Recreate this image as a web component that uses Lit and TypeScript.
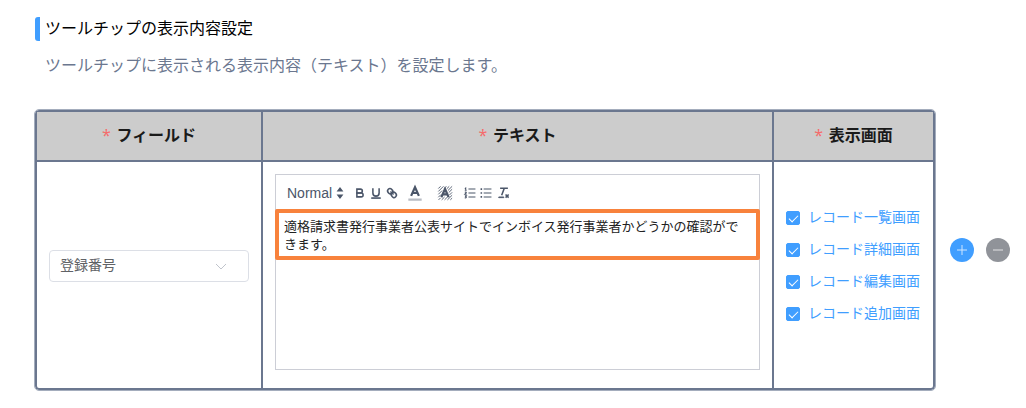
import { LitElement, html, svg, css } from "lit";
import { customElement, state } from "lit/decorators.js";

const line = (x1: number, x2: number, y1: number, y2: number) =>
  svg`<line x1=${x1} x2=${x2} y1=${y1} y2=${y2}></line>`;

const tools = [
  {
    label: "太字",
    kind: "tool",
    icon: svg`<path d="M5,4H9.5A2.5,2.5,0,0,1,9.5,9H5Z"/><path d="M5,9h5.5A2.5,2.5,0,0,1,10.5,14H5Z"/>`,
  },
  {
    label: "下線",
    kind: "tool",
    icon: svg`<path d="M5,3V9a4,4,0,0,0,8,0V3"/><rect class="solid" x="3" y="15" width="12" height="1" rx="0.5"/>`,
  },
  {
    label: "リンク",
    kind: "tool",
    icon: svg`${line(7, 11, 7, 11)}<path d="M8.9,4.577a3.476,3.476,0,0,1,.36,4.679A3.476,3.476,0,0,1,4.577,8.9C3.185,7.5,2.035,6.4,4.217,4.217S7.5,3.185,8.9,4.577Z"/><path d="M13.423,9.1a3.476,3.476,0,0,0-4.679-.36,3.476,3.476,0,0,0,.36,4.679c1.392,1.392,2.5,2.542,4.679.36S14.815,10.5,13.423,9.1Z"/>`,
  },
  {
    label: "文字色",
    kind: "tool color",
    icon: svg`<path class="faint" d="M3 15H15"/><path d="M5.5 11.6 9 3.8 12.5 11.6M6.6 9H11.4"/>`,
  },
  {
    label: "背景色",
    kind: "tool color",
    icon: svg`<path stroke-width="0.8" d="M3 5 5 3M3 7.6 7.6 3M3 10.2 6.4 6.8M3 12.8 5.4 10.4M3.2 15.2 5 13.4M6 15.2 8.6 12.6M8.6 15.2 11.2 12.6M11.2 15.2 15.4 11M13.8 15.2 15.4 13.6M8.4 4.8 10.2 3M10.6 5.2 12.8 3M11.6 6.8 15.4 3M12.4 8.6 15.4 5.6M13 10.8 15.4 8.4"/><path d="M5.7 12.8 9 5.4 12.3 12.8M6.8 10.2H11.2"/>`,
  },
  {
    label: "番号付きリスト",
    kind: "tool group",
    icon: svg`<path class="thin" d="M7 4H16M7 9H16M7 14H16M2.3 3.4 3.5 2.6V5.5M2.3 5.5H4.7M2.4 8.2C3 7.2 4.5 7.6 4.3 8.6L2.4 10.5H4.7M2.4 12.6H4.4L3.4 13.8C4.8 13.8 4.8 15.6 2.3 15.4"/>`,
  },
  {
    label: "箇条書き",
    kind: "tool",
    icon: svg`<path class="thin" d="M6 4H16M6 9H16M6 14H16"/><path d="M2 4H4M2 9H4M2 14H4"/>`,
  },
  {
    label: "書式をクリア",
    kind: "tool clean",
    icon: svg`<path d="M4 3H14M6 12 9.35 3M11 11 15 15M15 11 11 15"/><rect class="solid" x="2" y="14" width="7" height="1" rx="0.5"/>`,
  },
];

@customElement("rich-editor")
export class RichEditor extends LitElement {
  static styles = css`
    :host { display: block; }
    * { box-sizing: border-box; }
    .editor {
      position: relative;
      height: 196px;
      border: 1px solid #ccced6;
      display: flex;
      flex-direction: column;
    }
    .toolbar {
      height: 35px;
      flex: none;
      display: flex;
      align-items: center;
      padding: 2px 11px 0;
      border-bottom: 1px solid #ccced6;
      color: #4b5669;
    }
    .format { display: grid; align-items: center; margin-right: 8px; }
    .format > * { grid-area: 1 / 1; }
    .format select {
      appearance: none;
      width: 57px;
      height: 24px;
      border: 0;
      padding: 0;
      background: none;
      color: inherit;
      font: 14px/24px "Liberation Sans", Arial, sans-serif;
    }
    .format svg {
      justify-self: end;
      width: 8px;
      height: 12px;
      fill: currentColor;
      pointer-events: none;
    }
    .tool {
      width: 16px;
      height: 24px;
      padding: 0;
      border: 0;
      background: none;
      color: inherit;
      display: grid;
      place-items: center;
    }
    .tool svg {
      width: 14px;
      height: 14px;
      fill: none;
      stroke: currentColor;
      stroke-width: 2;
    }
    .color { width: 30px; }
    .color svg { width: 20px; height: 20px; }
    .group { margin-left: 2px; }
    .clean { width: 20px; }
    .solid { fill: currentColor; stroke-width: 1; }
    .tool .faint { opacity: 0.4; }
    .tool .thin { stroke-width: 1.3; }
    .content {
      flex: 1;
      width: 100%;
      resize: none;
      border: 0;
      outline: 0;
      padding: 7px 15px 7px 8px;
      background: transparent;
      color: #222;
      overflow: hidden;
      font: 13px/18px "Noto Sans CJK JP", sans-serif;
    }
    .highlight {
      position: absolute;
      top: 34px;
      left: -1px;
      right: -1px;
      height: 51px;
      border: 4px solid #f8823c;
      border-radius: 2px;
      pointer-events: none;
    }
  `;

  render() {
    return html`
      <div class="editor">
        <div class="toolbar" role="toolbar">
          <div class="format">
            <select aria-label="書式"><option>Normal</option></select>
            <svg viewBox="0 0 8 12"><path d="M4 0 7.4 4.6H.6ZM4 12 .6 7.4H7.4Z" /></svg>
          </div>
          ${tools.map(
            (t) => html`<button class=${t.kind} type="button" aria-label=${t.label}>
              <svg viewBox="0 0 18 18">${t.icon}</svg>
            </button>`
          )}
        </div>
        <textarea class="content" aria-label="テキスト" .value=${"適格請求書発行事業者公表サイトでインボイス発行事業者かどうかの確認ができます。"}></textarea>
        <div class="highlight"></div>
      </div>
    `;
  }
}

@customElement("app-root")
export class AppRoot extends LitElement {
  @state() private screens = [
    "レコード一覧画面",
    "レコード詳細画面",
    "レコード編集画面",
    "レコード追加画面",
  ];

  static styles = css`
    :host {
      display: block;
      background: #fff;
      font-family: "Noto Sans CJK JP", sans-serif;
    }
    * { box-sizing: border-box; }
    .page { padding: 17px 16px 16px 34px; }
    .title {
      margin: 0 0 0 1px;
      padding: 0 0 4px 5px;
      border-radius: 3px;
      background: linear-gradient(#409eff, #409eff) no-repeat left / 5px 100%;
      color: #000;
      font-size: 16px;
      font-weight: 400;
      line-height: 20px;
      text-indent: 5px;
    }
    .lead {
      margin: 11px 0 33px 11px;
      color: #6b778f;
      font-size: 16px;
      font-weight: 400;
      line-height: 24px;
    }
    .row { display: flex; align-items: center; gap: 14px; }
    .frame {
      flex: 1;
      min-width: 0;
      border: 1px solid #a4adbd;
      border-radius: 5px;
      overflow: hidden;
    }
    .grid {
      width: 100%;
      border: 2px solid #6b778f;
      border-radius: 4px;
      border-spacing: 0;
    }
    .grid th {
      height: 48px;
      padding: 0 0 4px;
      background: #ccc;
      color: #1a1a1a;
      font-size: 16px;
      font-weight: 700;
      line-height: 24px;
    }
    .grid td { padding: 0 12px 18px; border-top: 2px solid #6b778f; }
    .grid th + th, .grid td + td { border-left: 2px solid #6b778f; }
    .grid .field { width: 224px; }
    .grid .screens { width: 161px; }
    .grid .text { padding-top: 12px; }
    .star {
      margin-right: 2px;
      color: #f56c6c;
      font-family: "Noto Sans", sans-serif;
      font-weight: 400;
    }
    .picker { display: grid; align-items: center; }
    .picker > * { grid-area: 1 / 1; }
    .picker select {
      appearance: none;
      width: 100%;
      height: 32px;
      padding: 0 30px 4px 10px;
      border: 1px solid #dcdfe6;
      border-radius: 4px;
      background: #fff;
      color: #606266;
      font: 14px/26px "Noto Sans CJK JP", sans-serif;
    }
    .picker svg {
      justify-self: end;
      width: 12px;
      height: 12px;
      margin-right: 22px;
      fill: none;
      stroke: #c0c4cc;
      pointer-events: none;
    }
    .check {
      display: flex;
      align-items: center;
      gap: 8px;
      height: 32px;
      color: #409eff;
      font-size: 14px;
      white-space: nowrap;
    }
    .caption { padding-bottom: 4px; }
    .check input {
      appearance: none;
      display: grid;
      place-items: center;
      flex: none;
      width: 14px;
      height: 14px;
      margin: 0;
      border: 1px solid #409eff;
      border-radius: 2px;
    }
    .check input:checked { background: #409eff; }
    .check input:checked::before {
      content: "";
      width: 4px;
      height: 8px;
      border: solid #fff;
      border-width: 0 1px 1px 0;
      transform: translateY(-1px) rotate(45deg);
    }
    .actions { display: flex; gap: 12px; }
    .round {
      display: grid;
      place-items: center;
      width: 24px;
      height: 24px;
      padding: 0;
      border: 0;
      border-radius: 50%;
      background: #409eff;
    }
    .remove { background: #909399; }
    .round svg { width: 12px; height: 12px; stroke: #fff; opacity: 0.75; }
  `;

  private heading(name: string) {
    return html`<span class="star">*</span> ${name}`;
  }

  render() {
    return html`
      <main class="page">
        <h1 class="title">ツールチップの表示内容設定</h1>
        <p class="lead">ツールチップに表示される表示内容（テキスト）を設定します。</p>
        <div class="row">
          <div class="frame">
            <table class="grid">
              <thead>
                <tr>
                  <th class="field">${this.heading("フィールド")}</th>
                  <th>${this.heading("テキスト")}</th>
                  <th class="screens">${this.heading("表示画面")}</th>
                </tr>
              </thead>
              <tbody>
                <tr>
                  <td class="field">
                    <div class="picker">
                      <select aria-label="フィールド"><option>登録番号</option></select>
                      <svg viewBox="0 0 12 12"><path d="M1 4 6 9 11 4" /></svg>
                    </div>
                  </td>
                  <td class="text"><rich-editor></rich-editor></td>
                  <td class="screens">
                    ${this.screens.map(
                      (s) => html`<label class="check"><input type="checkbox" checked /><span class="caption">${s}</span></label>`
                    )}
                  </td>
                </tr>
              </tbody>
            </table>
          </div>
          <div class="actions">
            <button class="round" type="button" aria-label="追加">
              <svg viewBox="0 0 12 12"><path d="M1 6H11M6 1V11" /></svg>
            </button>
            <button class="round remove" type="button" aria-label="削除">
              <svg viewBox="0 0 12 12"><path d="M1 6H11" /></svg>
            </button>
          </div>
        </div>
      </main>
    `;
  }
}
